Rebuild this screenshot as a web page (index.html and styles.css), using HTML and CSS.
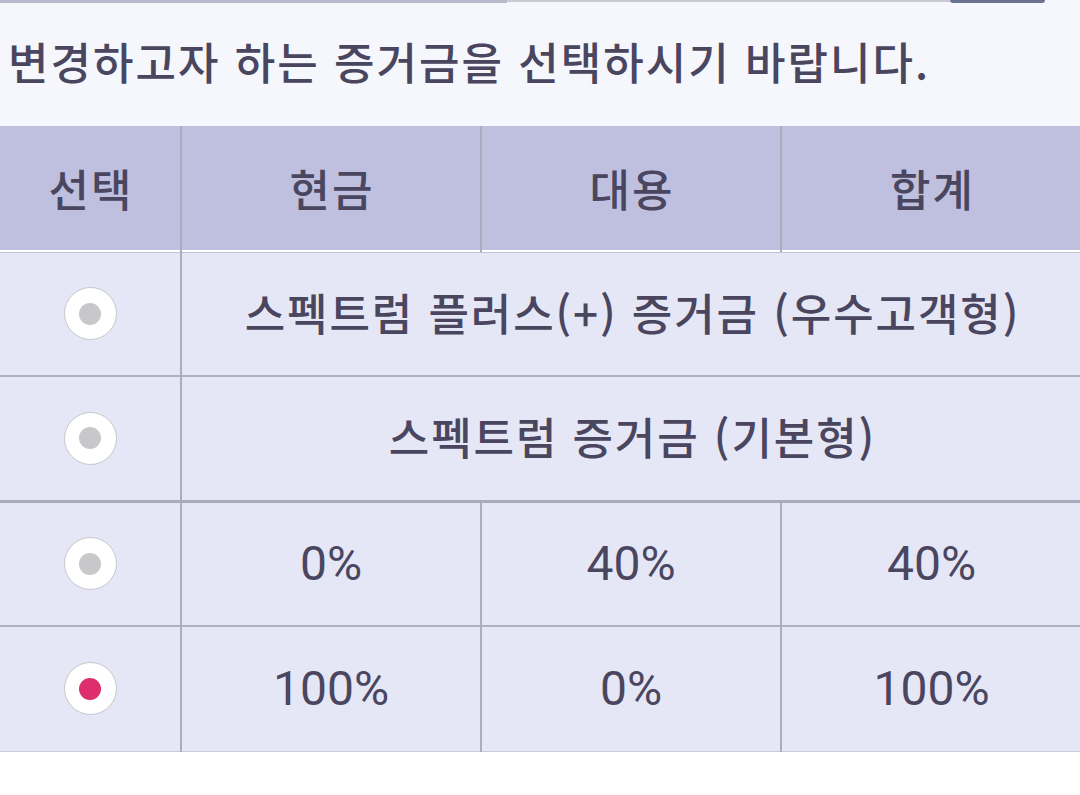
FILE: index.html
```html
<!DOCTYPE html>
<html lang="ko">
<head>
<meta charset="utf-8">
<link rel="stylesheet" href="styles.css">
</head>
<body>
<div class="topbar">
  <div class="seg-fill"></div>
  <div class="seg-line"></div>
  <div class="seg-pill"></div>
  <div class="seg-blank"></div>
</div>
<div class="intro">변경하고자 하는 증거금을 선택하시기 바랍니다.</div>
<table class="grid">
  <colgroup>
    <col class="c-sel"><col class="c-val"><col class="c-val"><col class="c-val">
  </colgroup>
  <thead>
    <tr><th>선택</th><th>현금</th><th>대용</th><th>합계</th></tr>
  </thead>
  <tbody>
    <tr class="first">
      <td><span class="radio"><span class="dot"></span></span></td>
      <td colspan="3" class="ko">스펙트럼 플러스(+) 증거금 (우수고객형)</td>
    </tr>
    <tr>
      <td><span class="radio"><span class="dot"></span></span></td>
      <td colspan="3" class="ko">스펙트럼 증거금 (기본형)</td>
    </tr>
    <tr class="split">
      <td><span class="radio"><span class="dot"></span></span></td>
      <td class="num">0%</td><td class="num">40%</td><td class="num">40%</td>
    </tr>
    <tr class="last">
      <td><span class="radio on"><span class="dot"></span></span></td>
      <td class="num">100%</td><td class="num">0%</td><td class="num">100%</td>
    </tr>
  </tbody>
</table>
</body>
</html>
```
FILE: styles.css
```css
html, body {
  margin: 0;
  padding: 0;
  background: #ffffff;
  width: 1080px;
  height: 795px;
  overflow: hidden;
  font-family: "Noto Sans CJK KR", "Noto Sans", sans-serif;
  color: #4a4660;
}
.topbar {
  display: flex;
  height: 4px;
  background: #f5f7fc;
}
.seg-fill {
  width: 507px;
  height: 3px;
  background: #b8b9cc;
}
.seg-line {
  width: 443px;
  height: 2px;
  background: #cacad3;
}
.seg-pill {
  width: 95px;
  height: 3px;
  background: #6b7393;
  border-radius: 0 0 10px 10px;
}
.seg-blank {
  flex: 1;
}
.intro {
  height: 122px;
  background: #f5f7fc;
  display: flex;
  align-items: center;
  padding-left: 8px;
  padding-bottom: 8px;
  font-size: 44px;
  font-weight: 500;
  letter-spacing: 2px;
  box-sizing: border-box;
}
.grid {
  width: 1080px;
  border-collapse: collapse;
  table-layout: fixed;
}
.c-sel { width: 181px; }
.c-val { width: 300px; }
.grid th, .grid td {
  height: 125px;
  padding: 0;
  text-align: center;
  vertical-align: middle;
  border-left: 2px solid #abacbf;
  box-sizing: border-box;
}
.grid th:first-child, .grid td:first-child {
  border-left: none;
}
.grid th {
  background: #bfc0df;
  font-size: 44px;
  font-weight: 500;
  letter-spacing: 2px;
  text-indent: 2px;
  border-bottom: 1px solid #a9aabd;
}
.grid td {
  background: #e5e7f6;
  border-top: 2px solid #aeafc1;
}
.grid tr.first td {
  border-top: 2px solid #ffffff;
  box-shadow: inset 0 1px 0 #c3c4d3;
}
.grid tr.split td {
  border-top: 3px solid #a9aabd;
}
.grid tr.last td {
  border-bottom: 1px solid #c9cad6;
}
.ko {
  font-size: 44px;
  font-weight: 500;
  letter-spacing: 1.9px;
  text-indent: 1.9px;
  padding-bottom: 4px !important;
}
.num {
  font-family: Roboto, "Noto Sans", sans-serif;
  font-size: 48px;
  font-weight: 400;
}
.radio {
  display: inline-flex;
  align-items: center;
  justify-content: center;
  width: 53px;
  height: 53px;
  border-radius: 50%;
  background: #ffffff;
  border: 1px solid #c6c6cc;
  box-sizing: border-box;
  vertical-align: middle;
}
.radio .dot {
  width: 22px;
  height: 22px;
  border-radius: 50%;
  background: #c8c8ca;
}
.radio.on .dot {
  background: #de2f6c;
}
```
